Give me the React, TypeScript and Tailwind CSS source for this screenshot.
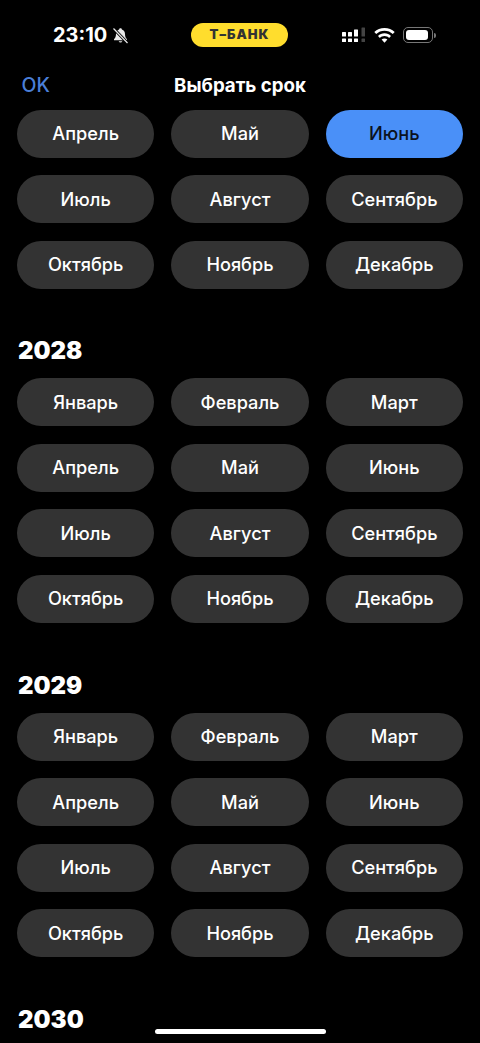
const MONTHS = ['Январь', 'Февраль', 'Март', 'Апрель', 'Май', 'Июнь', 'Июль', 'Август', 'Сентябрь', 'Октябрь', 'Ноябрь', 'Декабрь']

function MonthGrid({ months, selected }: { months: string[]; selected?: string }) {
  return (
    <div className="grid grid-cols-3 gap-x-[17px] gap-y-[17.5px]">
      {months.map((m) => (
        <button
          key={m}
          className={
            m === selected
              ? 'h-12 rounded-[24px] bg-[#4a90f8] text-[18.2px] font-medium text-[#0b1220]'
              : 'h-12 rounded-[24px] bg-[#333333] text-[18.2px] font-medium text-white'
          }
        >
          {m}
        </button>
      ))}
    </div>
  )
}

function Year({ year }: { year: string }) {
  return <h2 className="mt-[48.7px] mb-[13px] ml-px h-7 text-[24px] leading-7 font-black text-white">{year}</h2>
}

function StatusBar() {
  return (
    <div className="flex h-[66px] items-center pt-1 pr-[44px] pl-[53px]">
      <div className="flex w-[138px] items-center gap-[5px]">
        <span className="text-[20px] leading-6 font-bold text-white">23:10</span>
        <svg width="17" height="17" viewBox="0 0 17 17" fill="#e8e8e8">
          <path d="M8.5 1.2c-.8 0-1.3.5-1.4 1.2C5 3 4 4.8 4 7c0 2.800-.8 4-2 5.300v.9h13v-.9C13.800 11 13 9.800 13 7c0-2.200-1-4-3.100-4.600-.1-.7-.6-1.200-1.400-1.200z" />
          <path d="M6.700 14.200a1.900 1.900 0 0 0 3.600 0z" />
          <path d="M1.500 1.500l14 14.500" stroke="#000" strokeWidth="3" />
          <path d="M1.500 1.500l14 14.500" stroke="#e8e8e8" strokeWidth="1.200" />
        </svg>
      </div>
      <div className="flex h-6 w-[97px] items-center justify-center rounded-xl bg-[#ffdd2d] text-[13px] font-black tracking-[1px] text-[#333333]">
        Т–БАНК
      </div>
      <div className="ml-auto flex items-center gap-[8px]">
        <svg width="24" height="16" viewBox="0 0 24 16" fill="#fff">
          <rect x="0" y="5" width="4" height="4.500" rx="0.500" />
          <rect x="0" y="11.500" width="4" height="3.500" rx="0.500" />
          <rect x="6" y="5" width="4" height="4.500" rx="0.500" />
          <rect x="6" y="11.500" width="4" height="3.500" rx="0.500" />
          <rect x="12" y="2.500" width="4" height="7" rx="0.500" />
          <rect x="12" y="11.500" width="4" height="3.500" rx="0.500" />
          <rect x="19.500" y="0.500" width="3.500" height="9" rx="0.500" fill="#444" />
          <rect x="19.500" y="11.500" width="3.500" height="3.500" rx="0.500" fill="#444" />
        </svg>
        <svg width="21" height="15" viewBox="0 0 21 15" fill="#fff">
          <path d="M10.500 0C6.500 0 3 1.500.3 4.100l1.900 2C4.400 4 7.300 2.800 10.500 2.800s6.100 1.200 8.300 3.300l1.900-2C18 1.500 14.500 0 10.500 0z" />
          <path d="M10.500 5.300c-2.500 0-4.800.9-6.500 2.600l1.900 2c1.200-1.100 2.800-1.800 4.600-1.800s3.400.7 4.600 1.800l1.900-2c-1.700-1.700-4-2.600-6.500-2.600z" />
          <path d="M10.500 10.500c-1.100 0-2.100.4-2.900 1.100l2.900 3.100 2.900-3.100c-.8-.7-1.800-1.100-2.900-1.100z" />
        </svg>
        <div className="flex items-center gap-[1px]">
          <div className="flex h-[16px] w-[30px] items-center rounded-[5px] border border-[#777777] p-[2px]">
            <div className="h-full w-[22px] rounded-[3px] bg-white" />
          </div>
          <div className="h-[5px] w-[2px] rounded-r-sm bg-[#777777]" />
        </div>
      </div>
    </div>
  )
}

export default function App() {
  return (
    <div className="relative h-[1043px] w-[480px] overflow-hidden bg-black font-['Inter',sans-serif]">
      <StatusBar />

      {/* Header */}
      <div className="relative mb-[3.8px] flex h-10 items-center justify-center">
        <span className="absolute left-[21.5px] text-[19.5px] font-medium text-[#4a7fd8]">OK</span>
        <span className="text-[18.7px] font-bold text-white">Выбрать срок</span>
      </div>

      <div className="px-[17px]">
        <MonthGrid months={MONTHS.slice(3)} selected="Июнь" />
        <Year year="2028" />
        <MonthGrid months={MONTHS} />
        <Year year="2029" />
        <MonthGrid months={MONTHS} />
        <Year year="2030" />
      </div>

      {/* Home indicator */}
      <div className="absolute bottom-[9px] left-[155px] h-[5px] w-[171px] rounded-full bg-white" />
    </div>
  )
}
